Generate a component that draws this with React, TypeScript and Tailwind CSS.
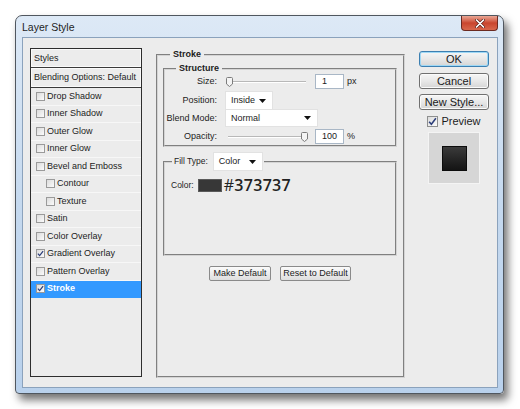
import React from "react";

const UI = { fontFamily: '"Liberation Sans", Arial, sans-serif' };
const WIN = { fontFamily: '"Liberation Sans", Arial, sans-serif' };

const STYLE_ROWS = [
  { label: "Drop Shadow" },
  { label: "Inner Shadow" },
  { label: "Outer Glow" },
  { label: "Inner Glow" },
  { label: "Bevel and Emboss" },
  { label: "Contour", indent: true },
  { label: "Texture", indent: true },
  { label: "Satin" },
  { label: "Color Overlay" },
  { label: "Gradient Overlay", checked: true },
  { label: "Pattern Overlay" },
  { label: "Stroke", checked: true, selected: true },
];

function Check({ checked, win }: { checked?: boolean; win?: boolean }) {
  return (
    <span
      className={
        "flex shrink-0 items-center justify-center border bg-gradient-to-br from-[#dcdcdc] to-[#fbfbfb] " +
        (win ? "h-[11px] w-[11px] border-[#8e8f8f]" : "h-[9px] w-[9px] border-[#9a9a9a]")
      }
    >
      {checked && (
        <svg width={win ? 9 : 7} height={win ? 9 : 7} viewBox="0 0 8 8">
          <path d="M1 4.2 L3 6.4 L7 1.2" fill="none" stroke="#2c3e7a" strokeWidth="1.4" />
        </svg>
      )}
    </span>
  );
}

function Arrow() {
  return (
    <svg width="7" height="4" viewBox="0 0 7 4" className="shrink-0">
      <path d="M0 0 H7 L3.5 4 Z" fill="#111" />
    </svg>
  );
}

function Select({ value, w, h }: { value: string; w: string; h: string }) {
  return (
    <div
      className={`flex items-center justify-between bg-white pl-[5px] pr-[6px] shadow-[0_0_0_1px_#e2e2e2] ${w} ${h}`}
    >
      <span>{value}</span>
      <Arrow />
    </div>
  );
}

function Slider({ at }: { at: "start" | "end" }) {
  return (
    <div className="relative h-[15px] w-[82px]">
      <div className="absolute left-[2px] right-[2px] top-[7px] h-[1px] bg-[#b8b8b8]" />
      <div className="absolute left-[2px] right-[2px] top-[8px] h-[1px] bg-white" />
      <svg
        width="7"
        height="10"
        viewBox="0 0 7 10"
        className={"absolute top-[3px] " + (at === "start" ? "left-0" : "right-0")}
      >
        <path d="M0.5 1.5 Q0.5 0.5 1.5 0.5 H5.5 Q6.5 0.5 6.5 1.5 V7 L3.5 9.5 L0.5 7 Z" fill="#f4f4f4" stroke="#7c7c7c" />
      </svg>
    </div>
  );
}

function NumBox({ value }: { value: string }) {
  return (
    <div className="flex h-[15px] w-[29px] items-center border border-[#a9b7c6] bg-white pl-[6px]">{value}</div>
  );
}

function WinButton({ children, focus }: { children: React.ReactNode; focus?: boolean }) {
  return (
    <div
      className={
        "flex h-[16px] w-[70px] items-center justify-center rounded-[3px] border bg-gradient-to-b from-[#f6f6f6] via-[#e8e8e8] to-[#d5d5d5] text-[11px] text-[#1a1a1a] " +
        (focus ? "border-[#3c7fb1] shadow-[inset_0_0_0_1px_#9fd8f5]" : "border-[#707070] shadow-[inset_0_0_0_1px_#fbfbfb]")
      }
      style={WIN}
    >
      {children}
    </div>
  );
}

function SmallButton({ children, w }: { children: React.ReactNode; w: string }) {
  return (
    <div
      className={`flex h-[15px] items-center justify-center rounded-[2px] border border-[#8a8a8a] bg-gradient-to-b from-[#fbfbfb] to-[#dedede] ${w}`}
    >
      {children}
    </div>
  );
}

function Field({ label, children }: { label: string; children: React.ReactNode }) {
  return (
    <div className="flex items-center">
      <span className="w-[53px] whitespace-nowrap pr-[1px] text-right">{label}</span>
      <div className="ml-[8px] flex items-center">{children}</div>
    </div>
  );
}

export default function App() {
  return (
    <div className="h-[409px] w-[520px] overflow-hidden bg-white pl-[15px] pt-[15px]">
      <div className="flex h-[379px] w-[489px] flex-col rounded-t-[7px] rounded-b-[4px] border border-[#50575f] bg-gradient-to-b from-[#dde9f6] via-[#c5d9ef] to-[#b9d1ec] shadow-[4px_6px_9px_rgba(0,0,0,0.55)]">
        {/* title bar */}
        <div className="flex h-[21px] items-start justify-between">
          <span className="pl-[6px] pt-[6px] text-[10.5px] leading-none text-[#1e1e1e]" style={WIN}>
            Layer Style
          </span>
          <div className="mr-[5px] flex h-[15px] w-[37px] items-center justify-center rounded-b-[4px] border border-t-0 border-[#6b2a21] bg-gradient-to-b from-[#e9a796] via-[#c9452e] to-[#d8674c]">
            <svg width="10" height="9" viewBox="0 0 10 9">
              <path d="M1.5 1 L8.5 8 M8.5 1 L1.5 8" stroke="#5a1f17" strokeWidth="3" strokeLinecap="round" />
              <path d="M1.5 1 L8.5 8 M8.5 1 L1.5 8" stroke="#fff" strokeWidth="1.7" strokeLinecap="round" />
            </svg>
          </div>
        </div>

        {/* client area */}
        <div
          className="mb-[5px] ml-[6px] mr-[5px] flex flex-1 border border-[#8ba2bc] bg-[#ececec] pl-[7px] pt-[10px] text-[9px] leading-none text-[#1c1c1c]"
          style={UI}
        >
          {/* styles list */}
          <div className="flex h-[329px] w-[112px] flex-col border border-[#2e2e2e] bg-[#ececec]">
            <div className="flex h-[19px] items-center border-b border-[#3a3a3a] pl-[3px] shadow-[inset_0_0_0_1px_#fafafa]">
              Styles
            </div>
            <div className="flex h-[20px] items-center whitespace-nowrap border-b border-[#3a3a3a] pl-[3px] shadow-[inset_0_0_0_1px_#fafafa]">
              Blending Options: Default
            </div>
            {STYLE_ROWS.map((r) => (
              <div
                key={r.label}
                className={
                  "flex h-[17.5px] items-center gap-[2px] whitespace-nowrap border-b " +
                  (r.selected ? "border-[#3399ff] bg-[#3399ff] font-bold text-white" : "border-[#f7f7f7]") +
                  (r.indent ? " pl-[15px]" : " pl-[5px]")
                }
              >
                <Check checked={r.checked} />
                <span>{r.label}</span>
              </div>
            ))}
          </div>

          {/* stroke panel */}
          <fieldset className="ml-[14px] mt-[2px] h-[328px] w-[249px] border-2 border-[#d4d4d4] px-[5px] pb-[4px] pr-[6px] [border-style:groove]">
            <legend className="ml-[7px] px-[3px] font-bold">Stroke</legend>

            <fieldset className="mt-[5px] h-[83px] border-2 border-[#d4d4d4] [border-style:groove]">
              <legend className="ml-[11px] px-[3px] font-bold">Structure</legend>
              <div className="mt-[1px] flex flex-col">
                <Field label="Size:">
                  <Slider at="start" />
                  <span className="ml-[7px]">
                    <NumBox value="1" />
                  </span>
                  <span className="ml-[3px]">px</span>
                </Field>
                <div className="mt-[3px]">
                  <Field label="Position:">
                    <Select value="Inside" w="w-[46px]" h="h-[17px]" />
                  </Field>
                </div>
                <div className="mt-[1px]">
                  <Field label="Blend Mode:">
                    <Select value="Normal" w="w-[91px]" h="h-[16px]" />
                  </Field>
                </div>
                <div className="mt-[3px]">
                  <Field label="Opacity:">
                    <Slider at="end" />
                    <span className="ml-[7px]">
                      <NumBox value="100" />
                    </span>
                    <span className="ml-[3px]">%</span>
                  </Field>
                </div>
              </div>
            </fieldset>

            <fieldset className="mt-[6px] h-[103px] border-2 border-[#d4d4d4] [border-style:groove]">
              <legend className="ml-[7px] flex items-center px-[2px]">
                <span className="text-[8.5px]">Fill Type:</span>
                <span className="ml-[6px]">
                  <Select value="Color" w="w-[48px]" h="h-[17px]" />
                </span>
              </legend>
              <div className="mt-[7px] flex items-center pl-[6px]">
                <span className="text-[8.5px]">Color:</span>
                <span className="ml-[4px] h-[13px] w-[24px] border border-[#5a5a5a] bg-[#373737]" />
                <span
                  className="ml-[2px] text-[16px] font-semibold tracking-[0.3px] text-[#222]"
                  style={{ fontFamily: '"Open Sans", "Liberation Sans", sans-serif' }}
                >
                  <span className="font-normal">#</span>373737
                </span>
              </div>
            </fieldset>

            <div className="mt-[10px] flex justify-center gap-[9px]">
              <SmallButton w="w-[62px]">Make Default</SmallButton>
              <SmallButton w="w-[71px]">Reset to Default</SmallButton>
            </div>
          </fieldset>

          {/* right column */}
          <div className="ml-[14px] mt-[3px] flex w-[70px] flex-col items-center">
            <WinButton focus>OK</WinButton>
            <div className="mt-[6px]">
              <WinButton>Cancel</WinButton>
            </div>
            <div className="mt-[5px]">
              <WinButton>New Style...</WinButton>
            </div>
            <div className="mt-[6px] flex items-center gap-[3px] text-[11px]" style={WIN}>
              <Check checked win />
              <span>Preview</span>
            </div>
            <div className="mt-[5px] flex h-[52px] w-[52px] items-center justify-center border border-[#f4f4f4] bg-[#d6d6d6]">
              <div className="h-[25px] w-[25px] border border-[#0c0c0c] bg-gradient-to-b from-[#3b3b3b] to-[#141414]" />
            </div>
          </div>
        </div>
      </div>
    </div>
  );
}
